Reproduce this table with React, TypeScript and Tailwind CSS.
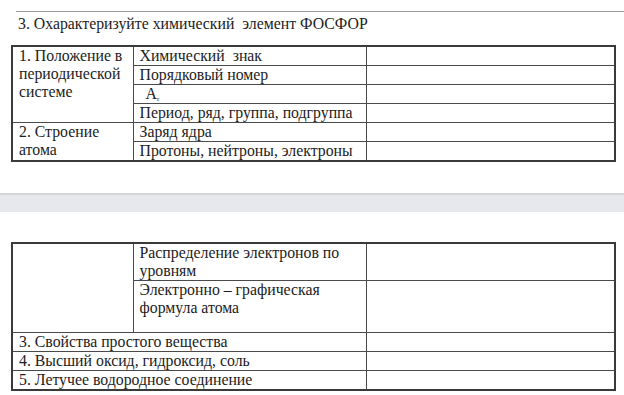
const cell = "border border-[#4a4a4a] px-[6px] py-0 align-top text-left font-normal";

const Row = ({ label }: { label: React.ReactNode }) => (
    <tr className="h-[18px]">
        <td className={cell}>{label}</td>
        <td className={cell}></td>
    </tr>
);

export default function App() {
    return (
        <div className="w-[624px] h-[395px] bg-white overflow-hidden text-[15.8px] leading-[18px] text-[#1c1c1c] font-['Liberation_Serif',serif]">
            <div className="pt-[11px] pl-[16px]">
                <div className="border-t border-[#9c9c9c]"></div>
            </div>
            <p className="pl-[18px] pt-[2px] leading-[19px]">3. Охарактеризуйте химический&nbsp; элемент ФОСФОР</p>

            <table className="mt-[12px] ml-[11px] w-[605px] border-collapse border-2 border-[#3a3a3a] table-fixed">
                <colgroup>
                    <col className="w-[121px]" />
                    <col className="w-[233px]" />
                    <col />
                </colgroup>
                <tbody>
                    <tr className="h-[18px]">
                        <td rowSpan={4} className={cell}>
                            1. Положение в<br />периодической<br />системе
                        </td>
                        <td className={cell}>Химический&nbsp; знак</td>
                        <td className={cell}></td>
                    </tr>
                    <Row label="Порядковый номер" />
                    <Row
                        label={
                            <span className="pl-[6px]">
                                А<sub className="text-[7px]">r</sub>
                            </span>
                        }
                    />
                    <Row label="Период, ряд, группа, подгруппа" />
                    <tr className="h-[18px]">
                        <td rowSpan={2} className={cell}>
                            2. Строение<br />атома
                        </td>
                        <td className={cell}>Заряд ядра</td>
                        <td className={cell}></td>
                    </tr>
                    <Row label="Протоны, нейтроны, электроны" />
                </tbody>
            </table>

            <div className="mt-[31px] h-[19px] border-t-2 border-[#d6d6d8] bg-[#e7e8ed]"></div>

            <table className="mt-[30px] ml-[11px] w-[605px] border-collapse border-2 border-[#3a3a3a] table-fixed">
                <colgroup>
                    <col className="w-[121px]" />
                    <col className="w-[233px]" />
                    <col />
                </colgroup>
                <tbody>
                    <tr className="h-[36px]">
                        <td rowSpan={2} className={cell}></td>
                        <td className={cell}>
                            Распределение электронов по<br />уровням
                        </td>
                        <td className={cell}></td>
                    </tr>
                    <tr className="h-[52px]">
                        <td className={cell}>
                            Электронно – графическая<br />формула атома
                        </td>
                        <td className={cell}></td>
                    </tr>
                    {[
                        "3. Свойства простого вещества",
                        "4. Высший оксид, гидроксид, соль",
                        "5. Летучее водородное соединение",
                    ].map((t) => (
                        <tr key={t} className="h-[18px]">
                            <td colSpan={2} className={cell}>{t}</td>
                            <td className={cell}></td>
                        </tr>
                    ))}
                </tbody>
            </table>
        </div>
    );
}
